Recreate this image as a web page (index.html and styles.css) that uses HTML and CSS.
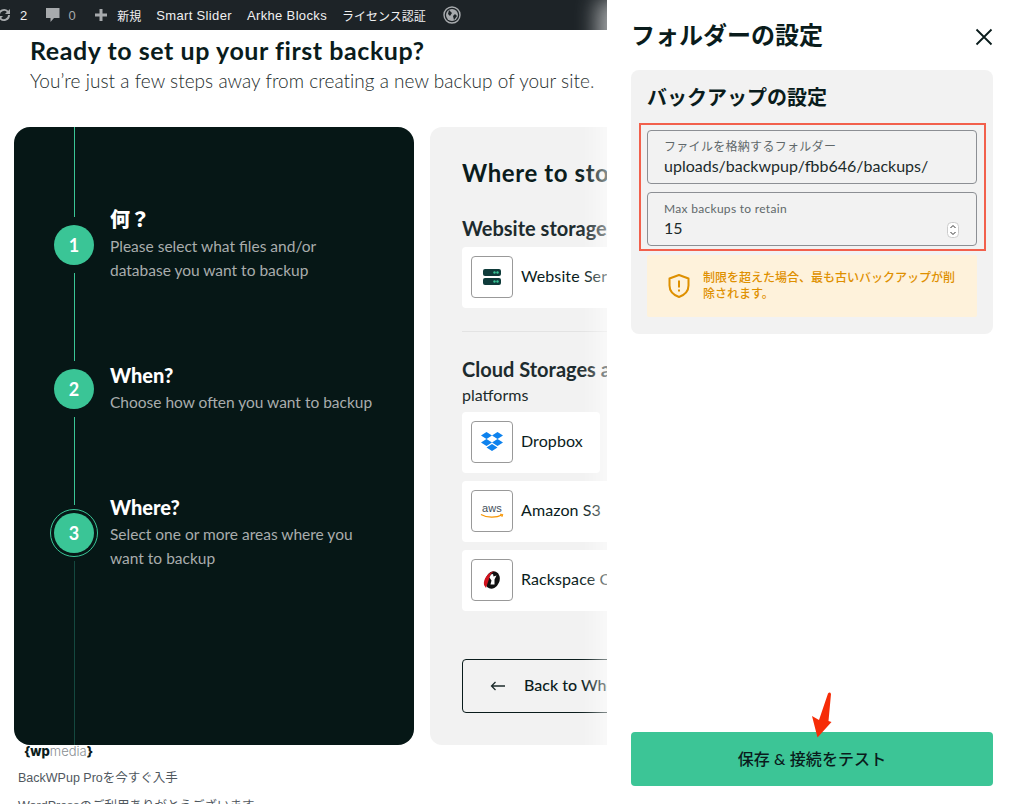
FILE: index.html
```html
<!DOCTYPE html>
<html lang="ja">
<head>
    <meta charset="UTF-8">
    <meta name="viewport" content="width=device-width">
    <title>BackWPup</title>
    <link rel="stylesheet" href="styles.css">
</head>
<body>
<div id="adminbar">
    <svg class="bar-icon sync" width="18" height="18" viewBox="0 0 18 18"><path d="M3 9a6 6 0 0 1 10.300-4.200L15 3v5h-5l1.900-1.900A4 4 0 0 0 5 9zM15 9a6 6 0 0 1-10.300 4.200L3 15v-5h5l-1.900 1.900A4 4 0 0 0 13 9z" fill="#a7aaad"/></svg>
    <span class="bar-item count">2</span>
    <svg class="bar-icon bubble" width="18" height="18" viewBox="0 0 18 18"><path d="M2 2h13.500v10H10l-3.500 4v-4H2z" fill="#a7aaad"/></svg>
    <span class="bar-item muted">0</span>
    <svg class="bar-icon plus" width="14" height="14" viewBox="0 0 14 14"><path d="M5.500 1h3v4.500H13v3H8.500V13h-3V8.500H1v-3h4.500z" fill="#a7aaad"/></svg>
    <span class="bar-item new jp">新規</span>
    <span class="bar-item">Smart Slider</span>
    <span class="bar-item">Arkhe Blocks</span>
    <span class="bar-item jp">ライセンス認証</span>
    <svg class="bar-icon globe" width="18" height="18" viewBox="0 0 18 18"><circle cx="9" cy="9" r="8" fill="none" stroke="#a7aaad" stroke-width="1.400"/><circle cx="9" cy="9" r="6" fill="#a7aaad"/><path d="M6 4l3 3-2 3-2-2zM12 8l2 2-3 4-1-4z" fill="#1d2327"/></svg>
</div>

<div class="page">
    <h1>Ready to set up your first backup?</h1>
    <p class="lead">You’re just a few steps away from creating a new backup of your site.</p>

    <div class="columns">
        <div class="steps">
            <div class="line line-1"></div>
            <div class="line line-2"></div>
            <div class="line line-3"></div>
            <div class="line line-4"></div>
            <div class="step step-1">
                <div class="num">1</div>
                <div class="step-text">
                    <h3>何？</h3>
                    <p>Please select what files and/or<br>database you want to backup</p>
                </div>
            </div>
            <div class="step step-2">
                <div class="num">2</div>
                <div class="step-text">
                    <h3>When?</h3>
                    <p>Choose how often you want to backup</p>
                </div>
            </div>
            <div class="step step-3">
                <div class="num current">3</div>
                <div class="step-text">
                    <h3>Where?</h3>
                    <p>Select one or more areas where you<br>want to backup</p>
                </div>
            </div>
        </div>

        <div class="storage">
            <h2>Where to store your backups?</h2>
            <h4>Website storage</h4>
            <div class="card wide">
                <div class="logo">
                    <svg width="18" height="16" viewBox="0 0 18 16"><rect y="0" width="18" height="7" rx="2" fill="#0f3b3a"/><rect y="9" width="18" height="7" rx="2" fill="#0f3b3a"/><circle cx="11.500" cy="3.500" r="1.200" fill="#3ac596"/><circle cx="14.500" cy="3.500" r="1.200" fill="#3ac596"/><circle cx="11.500" cy="12.500" r="1.200" fill="#3ac596"/><circle cx="14.500" cy="12.500" r="1.200" fill="#3ac596"/></svg>
                </div>
                <span>Website Server</span>
            </div>
            <hr>
            <h4>Cloud Storages and other</h4>
            <p class="sub">platforms</p>
            <div class="card">
                <div class="logo">
                    <svg width="22" height="20" viewBox="0 0 22 20"><path d="M5.500 0L11 3.500 5.500 7 0 3.500zM16.500 0L22 3.500 16.500 7 11 3.500zM0 10.500L5.500 7 11 10.500 5.500 14zM16.500 7L22 10.500 16.500 14 11 10.500zM5.500 15.500L11 12l5.500 3.500L11 19z" fill="#0d82ee"/></svg>
                </div>
                <span>Dropbox</span>
            </div>
            <div class="card wide">
                <div class="logo">
                    <svg width="24" height="16" viewBox="0 0 24 16"><text x="12" y="9" text-anchor="middle" class="aws">aws</text><path d="M1 11.500c6 3.500 15 3.500 21 .5" fill="none" stroke="#f79400" stroke-width="1.200"/><path d="M20 11.200l2.800.3-1 2.500" fill="none" stroke="#f79400" stroke-width="1"/></svg>
                </div>
                <span>Amazon S3</span>
            </div>
            <div class="card wide">
                <div class="logo">
                    <svg width="20" height="20" viewBox="0 0 20 20"><ellipse cx="10.500" cy="10" rx="7" ry="9" transform="rotate(22 10.500 10)" fill="#111"/><path d="M2 15C1 9 6 2 13 1c-2 1-4 2-5 5L4 18z" fill="#d1121d"/><path d="M9 4.500l2-.5 .5 2.500 3-1-2 4v5h-4l1-4-2-3z" fill="#fff"/></svg>
                </div>
                <span>Rackspace Cloud Files</span>
            </div>
            <div class="back">
                <svg width="16" height="10" viewBox="0 0 16 10"><path d="M15 5H1.500M5.500 1L1.500 5l4 4" fill="none" stroke="#1c2b2b" stroke-width="1.300"/></svg>
                <span>Back to When</span>
            </div>
        </div>
    </div>

    <div class="footer">
        <div class="wpmedia"><b>{wp</b>media<b>}</b></div>
        <p>BackWPup Proを今すぐ入手</p>
        <p>WordPressのご利用ありがとうございます</p>
    </div>
</div>

<div class="drawer">
    <div class="drawer-head">
        <h2>フォルダーの設定</h2>
        <svg width="18" height="18" viewBox="0 0 18 18"><path d="M1.500 1.500l15 15M16.500 1.500l-15 15" stroke="#0a1c1c" stroke-width="1.800" fill="none"/></svg>
    </div>
    <div class="settings">
        <h3>バックアップの設定</h3>
        <div class="highlight">
            <div class="field">
                <label>ファイルを格納するフォルダー</label>
                <div class="value">uploads/backwpup/fbb646/backups/</div>
            </div>
            <div class="field">
                <label>Max backups to retain</label>
                <div class="value">15</div>
                <div class="spinner">
                    <svg width="12" height="16" viewBox="0 0 12 16"><rect x="0.500" y="0.500" width="11" height="15" rx="4" fill="#fff" stroke="#ccc"/><path d="M3.500 6L6 3.500 8.500 6M3.500 10L6 12.500 8.500 10" fill="none" stroke="#333" stroke-width="1"/></svg>
                </div>
            </div>
        </div>
        <div class="notice">
            <svg width="24" height="26" viewBox="0 0 24 26"><path d="M12 2l9.500 3.500v7c0 5.500-4 9.500-9.500 11.500C6.500 22 2.500 18 2.500 12.500v-7z" fill="none" stroke="#de9000" stroke-width="2" stroke-linejoin="round"/><path d="M12 7.500v7M12 16.500v2" stroke="#de9000" stroke-width="2" fill="none"/></svg>
            <p>制限を超えた場合、最も古いバックアップが削除されます。</p>
        </div>
    </div>
    <div class="save">保存 &amp; 接続をテスト</div>
    <svg class="red-arrow" width="24" height="46" viewBox="0 0 24 46"><path d="M18 1.500Q20 -.5 21 2L18.500 29 21.500 30 7.500 45.500 2 24 9 28z" fill="#f62c07"/></svg>
</div>
</body>
</html>
```

FILE: styles.css
```css
*{
    margin: 0;
    padding: 0;
    box-sizing: border-box;
}
html,body{
    width: 100%;
    height: 100%;
    overflow: hidden;
    background-color: #fff;
}
body{
    font-family: "Lato", "Noto Sans CJK JP", sans-serif;
    color: #0a1c1c;
    position: relative;
}

/* admin bar */
#adminbar{
    height: 30px;
    background-color: #1d2327;
    display: flex;
    align-items: center;
    font-family: "Liberation Sans", "Noto Sans CJK JP", sans-serif;
    font-size: 13px;
    letter-spacing: 0.35px;
    color: #f0f0f1;
    overflow: hidden;
}
.bar-icon{
    flex-shrink: 0;
}
.jp{
    font-size: 12px;
    letter-spacing: 0;
}
.sync{
    margin-left: -5px;
}
.count{
    margin-left: 7px;
}
.bubble{
    margin-left: 16px;
}
.muted{
    color: #a7aaad;
    margin-left: 7px;
}
.plus{
    margin-left: 18px;
}
.new{
    margin-left: 9px;
}
.bar-item + .bar-item{
    margin-left: 15px;
}
.globe{
    margin-left: 17px;
}

/* page */
.page{
    padding: 6px 0 0 14px;
}
h1{
    font-size: 25px;
    line-height: 28px;
    font-weight: 700;
    margin-left: 16px;
    letter-spacing: 0.56px;
    white-space: nowrap;
}
.lead{
    font-size: 19px;
    line-height: 28px;
    margin: 3px 0 0 16px;
    color: #1c2b2b;
    font-weight: 300;
    letter-spacing: 0.03px;
    white-space: nowrap;
}
.columns{
    display: flex;
    gap: 16px;
    margin-top: 32px;
    height: 618px;
}
.steps{
    width: 400px;
    flex-shrink: 0;
    background-color: #061716;
    border-radius: 16px;
    position: relative;
    display: flex;
    flex-direction: column;
    padding-left: 40px;
}
.line{
    position: absolute;
    left: 60px;
    width: 1px;
    background-color: #3ac596;
}
.line-1{
    top: 0;
    height: 90px;
}
.line-2{
    top: 146px;
    height: 88px;
}
.line-3{
    top: 290px;
    height: 88px;
}
.line-4{
    top: 434px;
    height: 184px;
    background-color: #14483f;
}
.step{
    display: flex;
    gap: 16px;
    color: #fff;
}
.step-1{
    margin-top: 78px;
}
.step-2{
    margin-top: 79px;
}
.step-3{
    margin-top: 79px;
}
.num{
    width: 40px;
    height: 40px;
    border-radius: 50%;
    background-color: #3ac596;
    display: flex;
    align-items: center;
    justify-content: center;
    font-size: 18px;
    font-weight: 700;
    flex-shrink: 0;
    margin-top: 20px;
}
.step-2 .num{
    margin-top: 8px;
}
.step-3 .num{
    margin-top: 20px;
}
.current{
    outline: 1px solid #3ac596;
    outline-offset: 3px;
}
.step-text h3{
    font-size: 20px;
    line-height: 28px;
    font-weight: 900;
    margin-bottom: 1px;
}
.step-text p{
    font-size: 15.500px;
    line-height: 24px;
    color: #a9adad;
    white-space: nowrap;
}

/* storage panel */
.storage{
    width: 600px;
    flex-shrink: 0;
    background-color: #f2f2f2;
    border-radius: 12px;
    padding: 32px 32px 0;
    display: flex;
    flex-direction: column;
    align-items: flex-start;
}
.storage h2{
    font-size: 24px;
    line-height: 28px;
    font-weight: 700;
    white-space: nowrap;
    letter-spacing: 0.6px;
}
.storage h4{
    font-size: 20px;
    line-height: 24px;
    font-weight: 700;
    color: #1d2b2e;
    white-space: nowrap;
}
.storage h2 + h4{
    margin-top: 29px;
}
.card{
    width: 138px;
    height: 61px;
    background-color: #fff;
    border-radius: 4px;
    display: flex;
    align-items: center;
    padding: 0 0 1px 9px;
    gap: 8px;
    font-size: 16px;
    letter-spacing: 0.1px;
    white-space: nowrap;
    margin-bottom: 8px;
}
.card span{
    padding-bottom: 3px;
}
.card.wide{
    width: 300px;
}
h4 + .card{
    margin-top: 7px;
}
.logo{
    width: 42px;
    height: 42px;
    border: 1px solid #999;
    border-radius: 4px;
    background-color: #fff;
    display: flex;
    align-items: center;
    justify-content: center;
    flex-shrink: 0;
}
.aws{
    font-family: "Liberation Sans", sans-serif;
    font-size: 11px;
    fill: #444f5a;
}
.storage hr{
    width: 300px;
    border: 0;
    border-top: 1px solid #e3e3e3;
    margin: 15px 0 25px;
}
.sub{
    font-size: 16px;
    line-height: 22px;
    margin-top: 3px;
    margin-bottom: 6px;
    color: #1c2b2b;
}
.back{
    margin-top: 40px;
    width: 300px;
    height: 54px;
    border: 1px solid #0a1c1c;
    border-radius: 4px;
    display: flex;
    align-items: center;
    gap: 18px;
    padding-left: 27px;
    font-size: 16px;
    font-weight: 500;
}
.back span{
    padding-bottom: 3px;
}

/* below the columns */
.footer{
    padding-left: 4px;
    font-family: "Liberation Sans", "Noto Sans CJK JP", sans-serif;
    font-size: 12.500px;
    color: #50575e;
}
.wpmedia{
    height: 14px;
    line-height: 12px;
    padding-left: 6px;
    font-size: 13px;
    color: #8a8f94;
    font-family: "Inter", sans-serif;
    font-weight: 300;
}
.wpmedia b{
    color: #0a1c1c;
    font-weight: 800;
}
.footer p{
    margin-top: 11px;
    line-height: 16px;
    white-space: nowrap;
}
.footer p + p{
    margin-top: 12px;
}

/* drawer */
.drawer{
    position: absolute;
    top: 0;
    right: 0;
    bottom: 0;
    width: 406px;
    background-color: #fff;
    padding: 0 20px 0 24px;
    display: flex;
    flex-direction: column;
    box-shadow: -10px 0 20px rgba(255,255,255,0.6);
}
.drawer-head{
    height: 70px;
    display: flex;
    justify-content: space-between;
    align-items: center;
}
.drawer-head h2{
    font-size: 24px;
    font-weight: 700;
    line-height: 32px;
    margin-top: -1px;
}
.drawer-head svg{
    margin-top: 4px;
}
.settings{
    background-color: #f2f2f2;
    border-radius: 8px;
    height: 264px;
    padding: 13px 16px 16px;
}
.settings h3{
    font-size: 20px;
    line-height: 28px;
    font-weight: 700;
    color: #0a1c1c;
}
.highlight{
    margin: 12px -9px 0 -8px;
    border: 2px solid #f2604c;
    padding: 5px 7px 0 6px;
    height: 128px;
    display: flex;
    flex-direction: column;
    gap: 8px;
}
.field{
    height: 54px;
    border: 1px solid #8c8f94;
    border-radius: 4px;
    padding: 8px 16px 0;
    position: relative;
}
.field label{
    display: block;
    font-size: 12px;
    line-height: 16px;
    color: #60686a;
    letter-spacing: 0.3px;
}
.value{
    font-size: 16px;
    line-height: 20px;
    margin-top: 1px;
    color: #1c2b2b;
    letter-spacing: 0;
    white-space: nowrap;
}
.spinner{
    position: absolute;
    right: 17px;
    top: 29px;
    line-height: 0;
}
.notice{
    margin-top: 4px;
    height: 62px;
    background-color: #fef2db;
    border-radius: 2px;
    display: flex;
    align-items: center;
    gap: 12px;
    padding: 0 20px;
    color: #de9000;
}
.notice svg{
    flex-shrink: 0;
}
.notice p{
    font-size: 12px;
    line-height: 16px;
    font-weight: 500;
}
.save{
    position: absolute;
    left: 24px;
    right: 20px;
    top: 732px;
    height: 54px;
    background-color: #3cc596;
    border-radius: 4px;
    display: flex;
    align-items: center;
    justify-content: center;
    padding-bottom: 3px;
    font-size: 16px;
    font-weight: 500;
    color: #0a1c1c;
    letter-spacing: 0.1px;
}
.red-arrow{
    position: absolute;
    left: 203px;
    top: 692px;
}
```
